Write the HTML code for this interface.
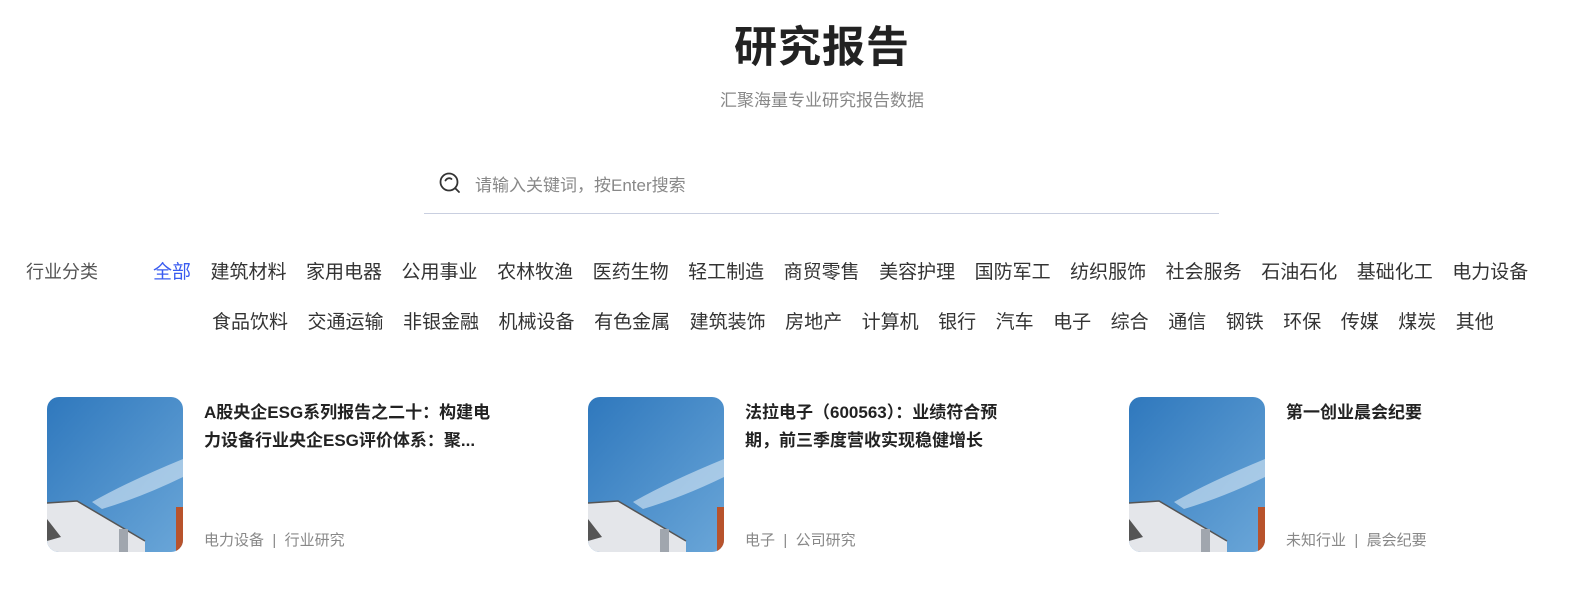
<!DOCTYPE html>
<html><head><meta charset="utf-8">
<style>
*{margin:0;padding:0;box-sizing:border-box}
body{width:1596px;height:612px;background:#fff;font-family:"Liberation Sans","Noto Sans CJK SC",sans-serif;position:relative;overflow:hidden;color:#333}
.abs{position:absolute;white-space:nowrap}
h1{position:absolute;left:0;width:1644px;text-align:center;top:13px;font-size:43px;font-weight:bold;color:#222;letter-spacing:1px}
.sub{left:0;width:1644px;text-align:center;top:86px;font-size:17px;color:#888}
.search{left:424px;top:160px;width:795px;height:54px;border-bottom:1px solid #c9cfe0}
.ph{position:absolute;left:51px;top:11px;font-size:17px;color:#888}
.row{position:absolute;display:flex;gap:19.5px;font-size:19px;color:#333}
.card{position:absolute;top:397px;width:500px;height:155px}
.thumb{position:absolute;left:0;top:0;width:136px;height:155px;border-radius:12px;overflow:hidden}
.ct{position:absolute;left:157px;top:2px;white-space:nowrap;font-size:17px;font-weight:bold;color:#222;line-height:28px}
.meta{position:absolute;left:157px;top:132px;font-size:15px;color:#888;white-space:nowrap}
</style></head><body>
<h1>研究报告</h1>
<div class="abs sub">汇聚海量专业研究报告数据</div>
<div class="abs search">
<svg style="position:absolute;left:14px;top:11px" width="24" height="24" viewBox="0 0 24 24" fill="none" stroke="#333" stroke-width="1.8" stroke-linecap="round"><circle cx="11" cy="11" r="8.5"/><path d="M17.5 17.5L21 21"/><path d="M7.5 9.5a4 4 0 0 1 6-1.5"/></svg>
<div class="ph">请输入关键词，按Enter搜索</div>
</div>
<div class="abs" style="left:26px;top:258px;font-size:18px;color:#555">行业分类</div>
<div class="row" style="left:153px;top:257px"><span style="color:#3a5cf0">全部</span><span>建筑材料</span><span>家用电器</span><span>公用事业</span><span>农林牧渔</span><span>医药生物</span><span>轻工制造</span><span>商贸零售</span><span>美容护理</span><span>国防军工</span><span>纺织服饰</span><span>社会服务</span><span>石油石化</span><span>基础化工</span><span>电力设备</span></div>
<div class="row" style="left:212px;top:307px"><span>食品饮料</span><span>交通运输</span><span>非银金融</span><span>机械设备</span><span>有色金属</span><span>建筑装饰</span><span>房地产</span><span>计算机</span><span>银行</span><span>汽车</span><span>电子</span><span>综合</span><span>通信</span><span>钢铁</span><span>环保</span><span>传媒</span><span>煤炭</span><span>其他</span></div>

<svg width="0" height="0" style="position:absolute"><defs>
<linearGradient id="sky" x1="0" y1="0" x2="1" y2="1"><stop offset="0" stop-color="#2f78bd"/><stop offset="1" stop-color="#6aa6d8"/></linearGradient>
<symbol id="th" viewBox="0 0 136 155">
<rect width="136" height="155" fill="url(#sky)"/>
<path d="M45 105 Q80 85 136 62 L136 80 Q95 100 55 112Z" fill="#dbe9f5" opacity=".6"/>
<path d="M0 106 L30 104 L98 144 L98 155 L0 155Z" fill="#e4e6ea"/>
<path d="M0 106 L30 104 L98 144" fill="none" stroke="#555" stroke-width="1.5"/>
<rect x="72" y="132" width="9" height="23" fill="#a0a6ae"/>
<path d="M0 122 L14 140 L0 144Z" fill="#555"/>
<rect x="129" y="110" width="7" height="45" fill="#b8532c"/>
</symbol></defs></svg>

<div class="card" style="left:47px"><svg class="thumb"><use href="#th"/></svg>
<div class="ct">A股央企ESG系列报告之二十：构建电<br>力设备行业央企ESG评价体系：聚...</div>
<div class="meta">电力设备 &nbsp;| &nbsp;行业研究</div></div>
<div class="card" style="left:588px"><svg class="thumb"><use href="#th"/></svg>
<div class="ct">法拉电子（600563）：业绩符合预<br>期，前三季度营收实现稳健增长</div>
<div class="meta">电子 &nbsp;| &nbsp;公司研究</div></div>
<div class="card" style="left:1129px"><svg class="thumb"><use href="#th"/></svg>
<div class="ct">第一创业晨会纪要</div>
<div class="meta">未知行业 &nbsp;| &nbsp;晨会纪要</div></div>
</body></html>
